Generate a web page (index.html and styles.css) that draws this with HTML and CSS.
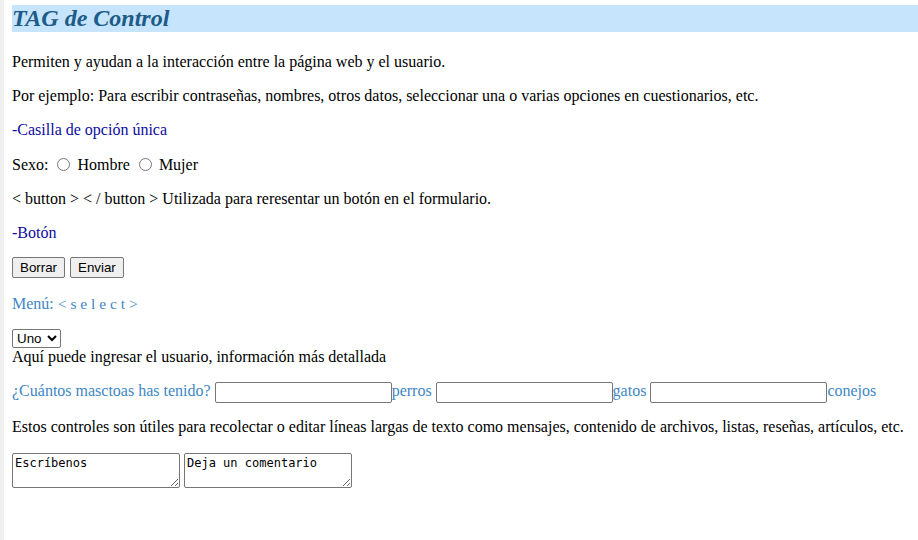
FILE: index.html
```html
<!DOCTYPE html>
<html lang="es">
<head>
<meta charset="utf-8">
<title>TAG de Control</title>
<link rel="stylesheet" href="styles.css">
</head>
<body>
<h2 class="title">TAG de Control</h2>
<p>Permiten y ayudan a la interacción entre la página web y el usuario.</p>
<p>Por ejemplo: Para escribir contraseñas, nombres, otros datos, seleccionar una o varias opciones en cuestionarios, etc.</p>
<p class="dark">-Casilla de opción única</p>
<p>Sexo: <input type="radio" name="sexo" class="radio"> Hombre <input type="radio" name="sexo" class="radio"> Mujer</p>
<p>&lt; button &gt; &lt; / button &gt; Utilizada para reresentar un botón en el formulario.</p>
<p class="dark">-Botón</p>
<p class="btnrow"><button class="btn">Borrar</button> <button class="btn">Enviar</button></p>
<p class="light">Menú: <span class="small">&lt; s e l e c t &gt;</span></p>
<div class="block">
<select class="sel"><option>Uno</option><option>Dos</option><option>Tres</option></select><br>
Aquí puede ingresar el usuario, información más detallada
</div>
<p class="light">¿Cuántos masctoas has tenido? <input type="text" class="field">perros <input type="text" class="field">gatos <input type="text" class="field">conejos</p>
<p>Estos controles son útiles para recolectar o editar líneas largas de texto como mensajes, contenido de archivos, listas, reseñas, artículos, etc.</p>
<div class="areas"><textarea class="area">Escríbenos</textarea> <textarea class="area">Deja un comentario</textarea></div>
</body>
</html>
```
FILE: styles.css
```css
html {
  background: linear-gradient(to right, #efefef 0, #efefef 4px, #ffffff 4px);
  min-height: 100%;
}
body {
  margin: 0;
  padding: 5px 0 8px 12px;
  font-family: "Liberation Serif", "Times New Roman", serif;
  font-size: 16px;
  color: #000;
}
.title {
  margin: 0 0 21px 0;
  background: #c6e4fb;
  color: #1d5b88;
  font-style: italic;
  font-weight: bold;
  font-size: 24px;
  line-height: 27px;
}
p {
  margin: 16px 0;
  line-height: 18px;
}
.dark {
  color: #0c0ca0;
}
.light {
  color: #3f86c4;
}
.small {
  font-size: 15.5px;
}
.radio {
  width: 13px;
  height: 13px;
  margin: 3px 3px 0 5px;
  vertical-align: -1px;
}
.btnrow {
  height: 21px;
}
.btn {
  font-family: "Liberation Sans", Arial, sans-serif;
  font-size: 13.33px;
  color: #000;
  background: #efefef;
  border: 1px solid #767676;
  border-radius: 2px;
  padding: 1px 7px;
  height: 21px;
  margin: -1px 1px 0 0;
  vertical-align: top;
}
.block {
  line-height: 18px;
}
.sel {
  font-family: "Liberation Sans", Arial, sans-serif;
  font-size: 13.33px;
  height: 19px;
  width: 49px;
  margin: -1px 0 0 0;
  border: 1px solid #767676;
  border-radius: 2px;
  background: #fff;
  color: #000;
}
.field {
  width: 171px;
  height: 17px;
  padding: 1px 2px;
  border: 1px solid #767676;
  border-radius: 2px;
  margin: 0 0 -1px 0;
  font-size: 13.33px;
  vertical-align: top;
}
.areas {
  margin-top: 17px;
  line-height: 0;
}
.area {
  width: 162px;
  height: 29px;
  padding: 2px;
  margin: 0;
  border: 1px solid #767676;
  border-radius: 2px;
  font-family: "DejaVu Sans Mono", "Liberation Mono", monospace;
  font-size: 12px;
  line-height: 15px;
  color: #000;
  vertical-align: top;
}
```
